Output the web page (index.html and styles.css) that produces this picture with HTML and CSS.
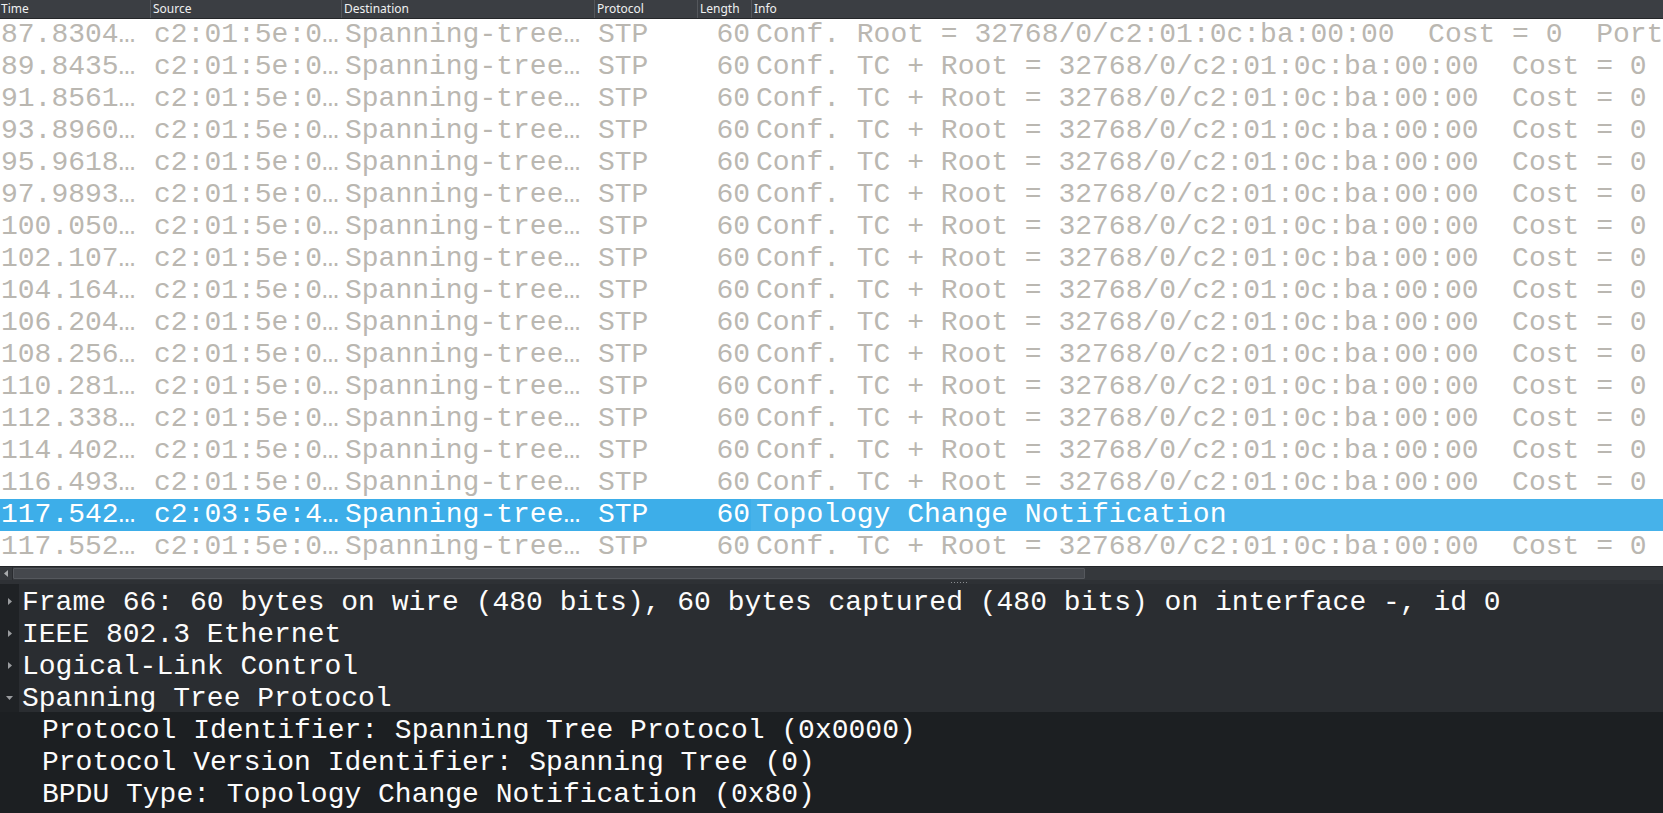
FILE: index.html
```html
<!DOCTYPE html>
<html>
<head>
<meta charset="utf-8">
<title>Packets</title>
<link rel="stylesheet" href="styles.css">
</head>
<body>
<div class="app">
  <div class="plist">
    <div class="phead">
      <div class="hc">Time</div>
      <div class="hc">Source</div>
      <div class="hc">Destination</div>
      <div class="hc">Protocol</div>
      <div class="hc">Length</div>
      <div class="hc">Info</div>
    </div>
    <div class="prows">
      <div class="row"><span class="c t">87.8304…</span><span class="c">c2:01:5e:0…</span><span class="c">Spanning-tree…</span><span class="c">STP</span><span class="c len">60</span><span class="c info">Conf. Root = 32768/0/c2:01:0c:ba:00:00  Cost = 0  Port</span></div>
      <div class="row"><span class="c t">89.8435…</span><span class="c">c2:01:5e:0…</span><span class="c">Spanning-tree…</span><span class="c">STP</span><span class="c len">60</span><span class="c info">Conf. TC + Root = 32768/0/c2:01:0c:ba:00:00  Cost = 0</span></div>
      <div class="row"><span class="c t">91.8561…</span><span class="c">c2:01:5e:0…</span><span class="c">Spanning-tree…</span><span class="c">STP</span><span class="c len">60</span><span class="c info">Conf. TC + Root = 32768/0/c2:01:0c:ba:00:00  Cost = 0</span></div>
      <div class="row"><span class="c t">93.8960…</span><span class="c">c2:01:5e:0…</span><span class="c">Spanning-tree…</span><span class="c">STP</span><span class="c len">60</span><span class="c info">Conf. TC + Root = 32768/0/c2:01:0c:ba:00:00  Cost = 0</span></div>
      <div class="row"><span class="c t">95.9618…</span><span class="c">c2:01:5e:0…</span><span class="c">Spanning-tree…</span><span class="c">STP</span><span class="c len">60</span><span class="c info">Conf. TC + Root = 32768/0/c2:01:0c:ba:00:00  Cost = 0</span></div>
      <div class="row"><span class="c t">97.9893…</span><span class="c">c2:01:5e:0…</span><span class="c">Spanning-tree…</span><span class="c">STP</span><span class="c len">60</span><span class="c info">Conf. TC + Root = 32768/0/c2:01:0c:ba:00:00  Cost = 0</span></div>
      <div class="row"><span class="c t">100.050…</span><span class="c">c2:01:5e:0…</span><span class="c">Spanning-tree…</span><span class="c">STP</span><span class="c len">60</span><span class="c info">Conf. TC + Root = 32768/0/c2:01:0c:ba:00:00  Cost = 0</span></div>
      <div class="row"><span class="c t">102.107…</span><span class="c">c2:01:5e:0…</span><span class="c">Spanning-tree…</span><span class="c">STP</span><span class="c len">60</span><span class="c info">Conf. TC + Root = 32768/0/c2:01:0c:ba:00:00  Cost = 0</span></div>
      <div class="row"><span class="c t">104.164…</span><span class="c">c2:01:5e:0…</span><span class="c">Spanning-tree…</span><span class="c">STP</span><span class="c len">60</span><span class="c info">Conf. TC + Root = 32768/0/c2:01:0c:ba:00:00  Cost = 0</span></div>
      <div class="row"><span class="c t">106.204…</span><span class="c">c2:01:5e:0…</span><span class="c">Spanning-tree…</span><span class="c">STP</span><span class="c len">60</span><span class="c info">Conf. TC + Root = 32768/0/c2:01:0c:ba:00:00  Cost = 0</span></div>
      <div class="row"><span class="c t">108.256…</span><span class="c">c2:01:5e:0…</span><span class="c">Spanning-tree…</span><span class="c">STP</span><span class="c len">60</span><span class="c info">Conf. TC + Root = 32768/0/c2:01:0c:ba:00:00  Cost = 0</span></div>
      <div class="row"><span class="c t">110.281…</span><span class="c">c2:01:5e:0…</span><span class="c">Spanning-tree…</span><span class="c">STP</span><span class="c len">60</span><span class="c info">Conf. TC + Root = 32768/0/c2:01:0c:ba:00:00  Cost = 0</span></div>
      <div class="row"><span class="c t">112.338…</span><span class="c">c2:01:5e:0…</span><span class="c">Spanning-tree…</span><span class="c">STP</span><span class="c len">60</span><span class="c info">Conf. TC + Root = 32768/0/c2:01:0c:ba:00:00  Cost = 0</span></div>
      <div class="row"><span class="c t">114.402…</span><span class="c">c2:01:5e:0…</span><span class="c">Spanning-tree…</span><span class="c">STP</span><span class="c len">60</span><span class="c info">Conf. TC + Root = 32768/0/c2:01:0c:ba:00:00  Cost = 0</span></div>
      <div class="row"><span class="c t">116.493…</span><span class="c">c2:01:5e:0…</span><span class="c">Spanning-tree…</span><span class="c">STP</span><span class="c len">60</span><span class="c info">Conf. TC + Root = 32768/0/c2:01:0c:ba:00:00  Cost = 0</span></div>
      <div class="row sel"><span class="c t">117.542…</span><span class="c">c2:03:5e:4…</span><span class="c">Spanning-tree…</span><span class="c">STP</span><span class="c len">60</span><span class="c info">Topology Change Notification</span></div>
      <div class="row"><span class="c t">117.552…</span><span class="c">c2:01:5e:0…</span><span class="c">Spanning-tree…</span><span class="c">STP</span><span class="c len">60</span><span class="c info">Conf. TC + Root = 32768/0/c2:01:0c:ba:00:00  Cost = 0</span></div>
    </div>
  </div>
  <div class="hscroll">
    <div class="sarrow"><svg width="4" height="7" viewBox="0 0 4 7"><path d="M4 0 L0 3.5 L4 7 Z" fill="#a9abad"/></svg></div>
    <div class="strack"><div class="sthumb"></div></div>
  </div>
  <div class="splitter"><span class="grip"></span></div>
  <div class="tree">
    <div class="trow top"><span class="tw"><svg width="4" height="7" viewBox="0 0 4 7"><path d="M0 0 L4 3.5 L0 7 Z" fill="#9a9c9f"/></svg></span><span class="tt">Frame 66: 60 bytes on wire (480 bits), 60 bytes captured (480 bits) on interface -, id 0</span></div>
    <div class="trow top"><span class="tw"><svg width="4" height="7" viewBox="0 0 4 7"><path d="M0 0 L4 3.5 L0 7 Z" fill="#9a9c9f"/></svg></span><span class="tt">IEEE 802.3 Ethernet</span></div>
    <div class="trow top"><span class="tw"><svg width="4" height="7" viewBox="0 0 4 7"><path d="M0 0 L4 3.5 L0 7 Z" fill="#9a9c9f"/></svg></span><span class="tt">Logical-Link Control</span></div>
    <div class="trow top"><span class="tw"><svg width="7" height="4" viewBox="0 0 7 4"><path d="M0 0 L7 0 L3.5 4 Z" fill="#9a9c9f"/></svg></span><span class="tt">Spanning Tree Protocol</span></div>
    <div class="trow child"><span class="tt">Protocol Identifier: Spanning Tree Protocol (0x0000)</span></div>
    <div class="trow child"><span class="tt">Protocol Version Identifier: Spanning Tree (0)</span></div>
    <div class="trow child"><span class="tt">BPDU Type: Topology Change Notification (0x80)</span></div>
  </div>
</div>
</body>
</html>
```

FILE: styles.css
```css
html, body {
  margin: 0;
  padding: 0;
  width: 1663px;
  height: 813px;
  overflow: hidden;
  background: #1c1f22;
}

.app {
  display: flex;
  flex-direction: column;
  width: 1663px;
  height: 813px;
}

.plist {
  display: flex;
  flex-direction: column;
  background: #ffffff;
  height: 566px;
  flex: none;
}

.phead,
.row {
  display: grid;
  grid-template-columns: 150px 191px 253px 103px 54px 1fr;
}

.phead {
  height: 18px;
  flex: none;
  background: #3b3e43;
  border-bottom: 1px solid #25272a;
  font-family: "Noto Sans", "Open Sans", sans-serif;
  font-size: 12px;
  line-height: 18px;
  color: #eff0f1;
}

.hc {
  padding-left: 2px;
  border-left: 1px solid #54575c;
  white-space: nowrap;
  overflow: hidden;
}

.hc:first-child {
  border-left: none;
  padding-left: 1px;
}

.prows {
  flex: 1;
  overflow: hidden;
}

.row {
  height: 32px;
  font-family: "Liberation Mono", monospace;
  font-size: 28px;
  line-height: 32px;
  color: #bab7b1;
}

.c {
  padding-left: 4px;
  white-space: pre;
  overflow: hidden;
}

.c.t {
  padding-left: 1px;
}

.c.len {
  text-align: right;
  padding-left: 0;
  padding-right: 1px;
}

.c.info {
  padding-left: 5px;
}

.row.sel {
  background: #3daee9;
  color: #ffffff;
}

.row.sel .info {
  background: #46b2ea;
}

.hscroll {
  display: flex;
  height: 13px;
  flex: none;
  border-top: 1px solid #232528;
  background: #35383c;
}

.sarrow {
  width: 12px;
  display: flex;
  align-items: center;
  justify-content: center;
  border-right: 1px solid #2a2c30;
}

.strack {
  flex: 1;
  display: flex;
  padding: 1px 0;
}

.sthumb {
  width: 1070px;
  background: #45484d;
  border: 1px solid #55585d;
  border-radius: 1px;
}

.splitter {
  height: 4px;
  flex: none;
  background: #2e3135;
  display: flex;
  justify-content: center;
  align-items: center;
}

.grip {
  width: 17px;
  height: 1px;
  margin-left: 256px;
  background: repeating-linear-gradient(90deg, #8a8d91 0 1px, transparent 1px 3px);
}

.tree {
  flex: 1;
  background: #1c1f22;
  font-family: "Liberation Mono", monospace;
  font-size: 28px;
  color: #fcfcfc;
}

.trow {
  height: 32px;
  display: flex;
  white-space: pre;
}

.tw {
  width: 19px;
  flex: none;
  display: flex;
  align-items: center;
  justify-content: center;
  background: #1f2225;
  padding-top: 3px;
  box-sizing: border-box;
}

.tt {
  padding-top: 6px;
  line-height: 26px;
}

.trow.top .tt {
  flex: 1;
  background: #2a2d31;
  padding-left: 3px;
}

.trow.child .tt {
  padding-left: 42px;
}
```
